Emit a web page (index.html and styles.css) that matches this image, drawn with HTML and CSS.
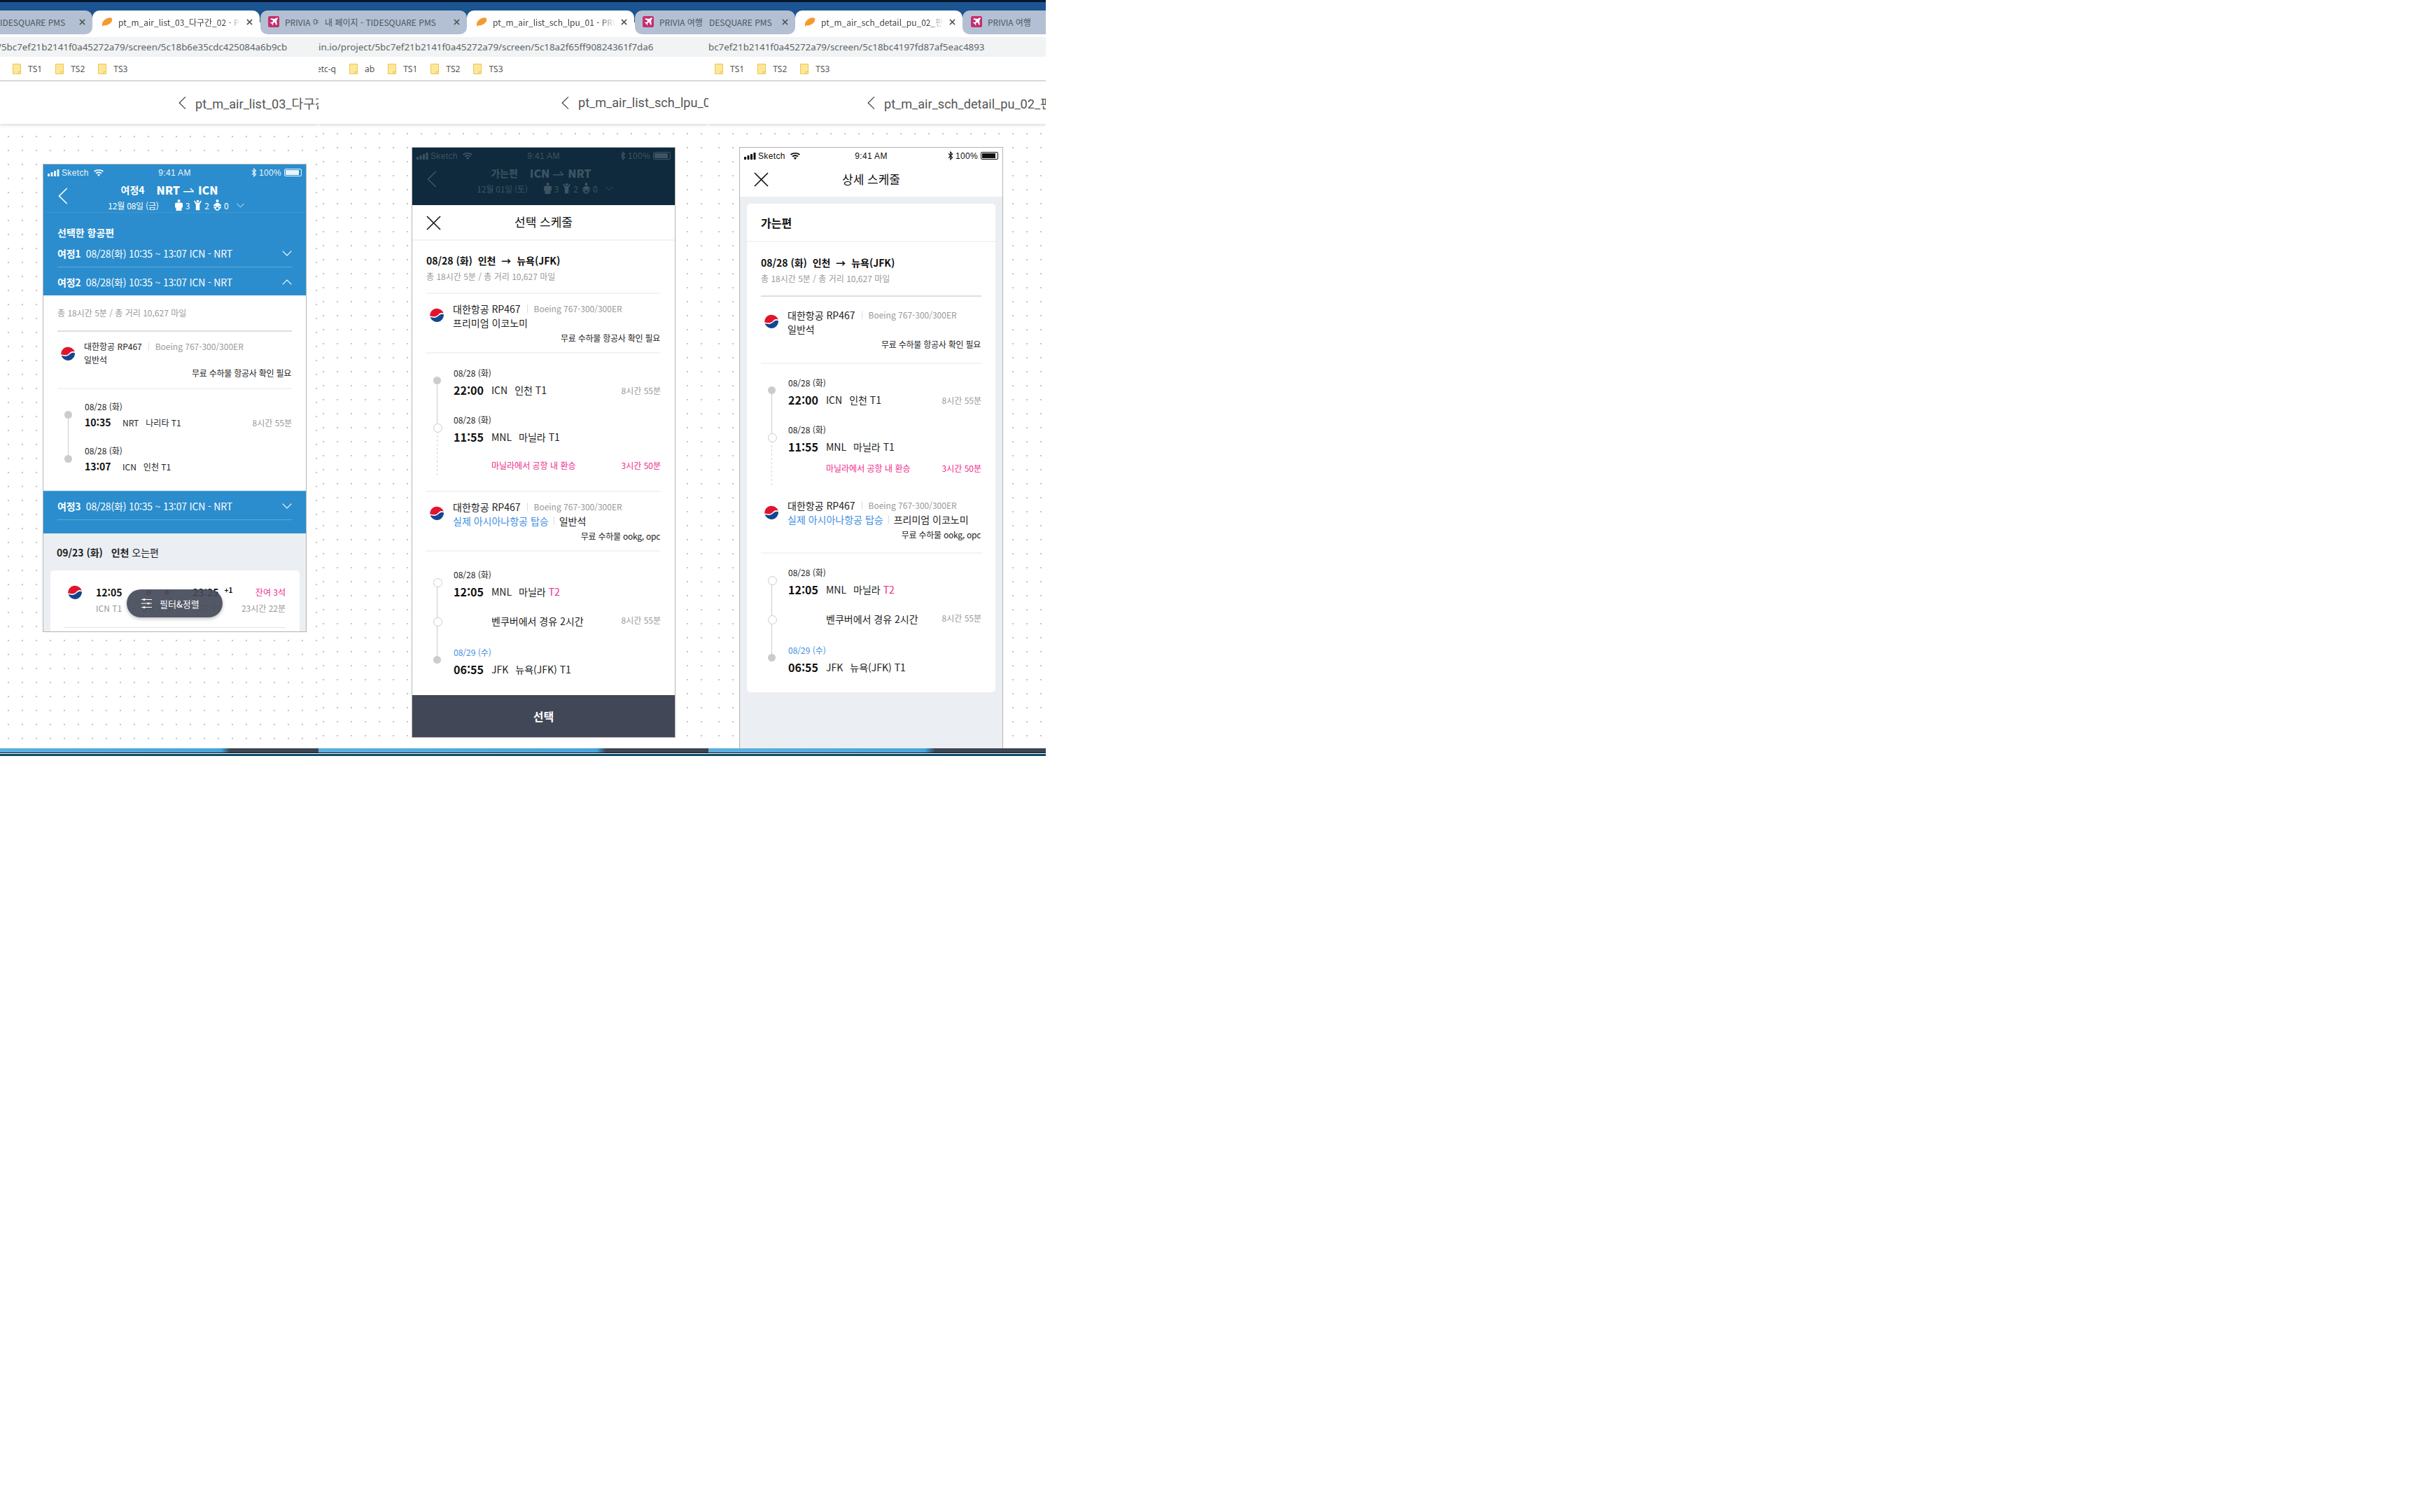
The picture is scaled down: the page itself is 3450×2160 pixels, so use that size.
FILE: index.html
```html
<!DOCTYPE html>
<html lang="ko">
<head>
<meta charset="utf-8">
<title>PRIVIA 여행 화면</title>
<link rel="stylesheet" href="styles.css">
</head>
<body>
<svg class="defs" width="0" height="0" aria-hidden="true">
  <symbol id="logo" viewBox="0 0 20 20">
    <circle cx="10" cy="10" r="10" fill="#fff"/>
    <path fill="#e2142d" d="M.2 11.500A10 10 0 0 1 19.800 8C18.500 6.500 15.500 6.500 13.500 8.300 11.500 10.200 9.500 12.500 6.500 12.300 4 12.200 1.800 11 .2 11.500Z"/>
    <path fill="#12468e" d="M20 9.600A10 10 0 0 1 .6 13.300C2.500 13.200 4 14 6.500 14 10 14 12 11.500 14 10 15.800 8.700 18.500 8.300 20 9.600Z"/>
  </symbol>
  <symbol id="signal" viewBox="0 0 17 10"><rect x="0" y="6" width="3" height="4" rx=".6"/><rect x="4.500" y="4" width="3" height="6" rx=".6"/><rect x="9" y="2" width="3" height="8" rx=".6"/><rect x="13.500" y="0" width="3" height="10" rx=".6"/></symbol>
  <symbol id="wifi" viewBox="0 0 14 10"><path d="M7 10 4.700 7.500c1.300-1.100 3.300-1.100 4.600 0L7 10ZM3.600 6.300 2.300 4.900c2.700-2.200 6.700-2.200 9.400 0l-1.300 1.400c-2-1.500-4.800-1.500-6.800 0ZM1.200 3.700 0 2.400c4-3.200 10-3.200 14 0l-1.200 1.300C9.400 1.100 4.600 1.100 1.200 3.700Z"/></symbol>
  <symbol id="bt" viewBox="0 0 8 13"><path d="M1 3.300 6.500 9 3.800 11.800V1.200L6.500 4 1 9.700" fill="none" stroke="currentColor" stroke-width="1.200"/></symbol>
  <symbol id="adult" viewBox="0 0 11 16"><circle cx="5.500" cy="2" r="2"/><path d="M2 4.600h7c1.100 0 2 .9 2 2v5H9.500V16h-8v-4.400H0v-5c0-1.100.9-2 2-2Z"/></symbol>
  <symbol id="child" viewBox="0 0 12 16"><circle cx="6" cy="2" r="2"/><path d="M0 1.500 1.300.8 4 4.500h4L10.700.8l1.300.7-3 5.700V16H3V7.200L0 1.500Z"/></symbol>
  <symbol id="baby" viewBox="0 0 11 16"><circle cx="5.500" cy="2" r="2"/><path d="M4 4.800h3L11 8v1.200H0V8L4 4.800Z"/><circle cx="5.500" cy="12.500" r="2.600" fill="none" stroke="currentColor" stroke-width="1.500"/><circle cx="1.500" cy="11.500" r="1.300"/><circle cx="9.500" cy="11.500" r="1.300"/></symbol>
  <symbol id="close" viewBox="0 0 21 21"><path d="M1 1 20 20M20 1 1 20" fill="none" stroke="currentColor" stroke-width="1.600"/></symbol>
  <symbol id="back" viewBox="0 0 14 24"><path d="M12.700 1 1.500 12l11.200 11" fill="none" stroke="currentColor" stroke-width="1.600"/></symbol>
  <symbol id="chev" viewBox="0 0 14 8"><path d="M.7.700 7 7 13.300.7" fill="none" stroke="currentColor" stroke-width="1.100"/></symbol>
  <symbol id="harrow" viewBox="0 0 15 7"><path d="M0 5.700h14.500L10 1" fill="none" stroke="currentColor" stroke-width="1.500"/></symbol>
  <symbol id="zep" viewBox="0 0 16 16"><path fill="#f59a2e" d="M1 11C2 6.500 6 3 11 2.300c2-.3 3.800.3 4.200 1.600.5 1.700-.6 4.600-3 6.600-2.500 2-6 3.200-8.500 2.800L1 14.700 1 11Z"/></symbol>
  <symbol id="privia" viewBox="0 0 16 16"><rect width="16" height="16" rx="2.500" fill="#c42f6e"/><path fill="#fff" d="M12.800 2.300c.7-.2 1.200.3 1 1L13 5 12 6.600l.8 5.200-1.100 1.100L9.300 8.500 7 10.500l.3 2-.8.800-1.300-2.500-2.500-1.300.8-.8 2 .3 2-2.300L3.100 4.300l1.100-1.100 5.200.8L11 3l1.800-.7Z"/></symbol>
  <symbol id="x" viewBox="0 0 10 10"><path d="M1 1 9 9M9 1 1 9" fill="none" stroke="currentColor" stroke-width="1.800"/></symbol>
  <symbol id="folder" viewBox="0 0 12 15"><path d="M.5.500h11v14H.5z" fill="#fde79a" stroke="#ecc650"/><path d="M8 14.500v-3h3.500" fill="none" stroke="#ecc650"/></symbol>
  <symbol id="filter" viewBox="0 0 15 14"><path d="M0 1.500h15M0 7h15M0 12.500h15" stroke="#fff" fill="none" stroke-width="1.200"/><circle cx="4" cy="1.500" r="1.600" fill="#fff"/><circle cx="10" cy="7" r="1.600" fill="#fff"/><circle cx="4" cy="12.500" r="1.600" fill="#fff"/></symbol>
</svg>

<main class="page">

<!-- ============ window 1 ============ -->
<section class="slice s1">
  <div class="topband"></div>
  <div class="tabs">
    <div class="tab off t-first"><span class="label lead">IDESQUARE PMS</span><svg class="tab-x"><use href="#x"/></svg></div>
    <div class="tab on"><svg class="fav"><use href="#zep"/></svg><span class="label fade">pt_m_air_list_03_다구간_02 - PRIVIA</span><svg class="tab-x"><use href="#x"/></svg></div>
    <div class="tab off t-open"><svg class="fav"><use href="#privia"/></svg><span class="label">PRIVIA 여행</span></div>
  </div>
  <div class="addr"><span class="addr-in">/5bc7ef21b2141f0a45272a79/screen/5c18b6e35cdc425084a6b9cb</span></div>
  <nav class="marks">
    <span class="mark"><svg class="folder"><use href="#folder"/></svg>TS1</span>
    <span class="mark"><svg class="folder"><use href="#folder"/></svg>TS2</span>
    <span class="mark"><svg class="folder"><use href="#folder"/></svg>TS3</span>
  </nav>
  <header class="scr-head"><svg class="scr-back"><use href="#back"/></svg><span class="scr-name">pt_m_air_list_03_다구간_02</span></header>
  <div class="canvas">
    <article class="phone p1">
      <div class="status">
        <div class="st-l"><svg class="i-signal"><use href="#signal"/></svg><span>Sketch</span><svg class="i-wifi"><use href="#wifi"/></svg></div>
        <div class="st-c">9:41 AM</div>
        <div class="st-r"><svg class="i-bt"><use href="#bt"/></svg><span>100%</span><span class="batt"><i></i></span></div>
      </div>
      <div class="appbar">
        <svg class="bar-back"><use href="#back"/></svg>
        <div class="bar-title"><span class="bt-ko">여정4</span><b>NRT</b><svg class="i-harrow"><use href="#harrow"/></svg><b>ICN</b></div>
        <div class="bar-sub"><span class="bs-date">12월 08일 (금)</span><svg class="i-pax"><use href="#adult"/></svg><span>3</span><svg class="i-pax"><use href="#child"/></svg><span>2</span><svg class="i-pax"><use href="#baby"/></svg><span>0</span><svg class="bs-chev"><use href="#chev"/></svg></div>
      </div>
      <div class="leg-panel">
        <h2 class="leg-head">선택한 항공편</h2>
        <div class="leg"><span><b>여정1</b>  08/28(화) 10:35 ~ 13:07 ICN - NRT</span><svg class="leg-chev"><use href="#chev"/></svg></div>
        <div class="leg leg-last"><span><b>여정2</b>  08/28(화) 10:35 ~ 13:07 ICN - NRT</span><svg class="leg-chev up"><use href="#chev"/></svg></div>
      </div>
      <div class="detail">
        <p class="sum">총 18시간 5분 / 총 거리 10,627 마일</p>
        <div class="rule strong"></div>
        <div class="carrier">
          <svg class="logo"><use href="#logo"/></svg>
          <div class="c-name">대한항공 RP467<i class="vbar"></i><span class="gray">Boeing 767-300/300ER</span></div>
          <div class="c-class">일반석</div>
          <div class="c-bag">무료 수하물 항공사 확인 필요</div>
        </div>
        <div class="rule"></div>
        <div class="stops">
          <div class="stop fill railed r63"><div class="date">08/28 (화)</div><div class="when"><b>10:35</b><span>NRT</span><span>나리타 T1</span><span class="dur">8시간 55분</span></div></div>
          <div class="stop fill"><div class="date">08/28 (화)</div><div class="when"><b>13:07</b><span>ICN</span><span>인천 T1</span></div></div>
        </div>
      </div>
      <div class="leg-panel tail">
        <div class="leg"><span><b>여정3</b>  08/28(화) 10:35 ~ 13:07 ICN - NRT</span><svg class="leg-chev"><use href="#chev"/></svg></div>
      </div>
      <div class="results">
        <h2 class="res-head"><b>09/23 (화)   인천</b> 오는편</h2>
        <div class="res-card">
          <svg class="logo"><use href="#logo"/></svg>
          <div class="rc-col rc-dep"><b>12:05</b><span class="gray">ICN T1</span></div>
          <div class="rc-mid"><span class="rc-dots"><i></i><i></i></span><span class="gray">2회 경유</span></div>
          <div class="rc-col rc-arr"><b>23:25 <sup>+1</sup></b><span class="gray">NRT T3</span></div>
          <div class="rc-end"><span class="pink">잔여 3석</span><span class="gray">23시간 22분</span></div>
          <div class="rc-rule"></div>
        </div>
      </div>
      <button class="pill" type="button"><svg class="i-filter"><use href="#filter"/></svg>필터&amp;정렬</button>
    </article>
  </div>
  <footer class="taskbar"><div class="tb-top"><i></i></div></footer>
</section>

<!-- ============ window 2 ============ -->
<section class="slice s2">
  <div class="topband"></div>
  <div class="tabs">
    <div class="tab off t-mid"><span class="label lead">내 페이지 - TIDESQUARE PMS</span><svg class="tab-x"><use href="#x"/></svg></div>
    <div class="tab on"><svg class="fav"><use href="#zep"/></svg><span class="label fade">pt_m_air_list_sch_lpu_01 - PRIVIA 여행</span><svg class="tab-x"><use href="#x"/></svg></div>
    <div class="tab off t-open"><svg class="fav"><use href="#privia"/></svg><span class="label">PRIVIA 여행</span></div>
  </div>
  <div class="addr"><span class="addr-in">in.io/project/5bc7ef21b2141f0a45272a79/screen/5c18a2f65ff90824361f7da6</span></div>
  <nav class="marks">
    <span class="mark etc">etc-q</span>
    <span class="mark"><svg class="folder"><use href="#folder"/></svg>ab</span>
    <span class="mark"><svg class="folder"><use href="#folder"/></svg>TS1</span>
    <span class="mark"><svg class="folder"><use href="#folder"/></svg>TS2</span>
    <span class="mark"><svg class="folder"><use href="#folder"/></svg>TS3</span>
  </nav>
  <header class="scr-head"><svg class="scr-back"><use href="#back"/></svg><span class="scr-name">pt_m_air_list_sch_lpu_01</span></header>
  <div class="canvas">
    <article class="phone p2">
      <div class="dim-top">
        <div class="status">
          <div class="st-l"><svg class="i-signal"><use href="#signal"/></svg><span>Sketch</span><svg class="i-wifi"><use href="#wifi"/></svg></div>
          <div class="st-c">9:41 AM</div>
          <div class="st-r"><svg class="i-bt"><use href="#bt"/></svg><span>100%</span><span class="batt"><i></i></span></div>
        </div>
        <div class="appbar">
          <svg class="bar-back"><use href="#back"/></svg>
          <div class="bar-title"><span class="bt-ko">가는편</span><b>ICN</b><svg class="i-harrow"><use href="#harrow"/></svg><b>NRT</b></div>
          <div class="bar-sub"><span class="bs-date">12월 01일 (토)</span><svg class="i-pax"><use href="#adult"/></svg><span>3</span><svg class="i-pax"><use href="#child"/></svg><span>2</span><svg class="i-pax"><use href="#baby"/></svg><span>0</span><svg class="bs-chev"><use href="#chev"/></svg></div>
        </div>
      </div>
      <div class="sheet-bar"><svg class="x-btn"><use href="#close"/></svg><h1>선택 스케줄</h1></div>
      <div class="sheet-body">
        <h2 class="route">08/28 (화)&nbsp; 인천 &nbsp;→&nbsp; 뉴욕(JFK)</h2>
        <p class="sum">총 18시간 5분 / 총 거리 10,627 마일</p>
        <div class="rule"></div>
        <div class="carrier">
          <svg class="logo"><use href="#logo"/></svg>
          <div class="c-name">대한항공 RP467<i class="vbar"></i><span class="gray">Boeing 767-300/300ER</span></div>
          <div class="c-class">프리미엄 이코노미</div>
          <div class="c-bag">무료 수하물 항공사 확인 필요</div>
        </div>
        <div class="rule"></div>
        <div class="stops">
          <div class="stop fill railed r67"><div class="date">08/28 (화)</div><div class="when"><b>22:00</b><span>ICN</span><span>인천 T1</span><span class="dur">8시간 55분</span></div></div>
          <div class="stop hollow railed dashed r71"><div class="date">08/28 (화)</div><div class="when"><b>11:55</b><span>MNL</span><span>마닐라 T1</span></div></div>
          <div class="transfer pink"><span>마닐라에서 공항 내 환승</span><span class="dur pink">3시간 50분</span></div>
        </div>
        <div class="rule after-transfer"></div>
        <div class="carrier">
          <svg class="logo"><use href="#logo"/></svg>
          <div class="c-name">대한항공 RP467<i class="vbar"></i><span class="gray">Boeing 767-300/300ER</span></div>
          <div class="c-class"><span class="blue">실제 아시아나항공 탑승</span><i class="vbar short"></i>일반석</div>
          <div class="c-bag">무료 수하물 ookg, opc</div>
        </div>
        <div class="rule"></div>
        <div class="stops second">
          <div class="stop hollow railed r57"><div class="date">08/28 (화)</div><div class="when"><b>12:05</b><span>MNL</span><span>마닐라 <em class="pink">T2</em></span></div></div>
          <div class="via hollow railed r54"><span>벤쿠버에서 경유 2시간</span><span class="dur">8시간 55분</span></div>
          <div class="stop fill"><div class="date blue">08/29 (수)</div><div class="when"><b>06:55</b><span>JFK</span><span>뉴욕(JFK) T1</span></div></div>
        </div>
      </div>
      <button class="cta" type="button">선택</button>
    </article>
  </div>
  <footer class="taskbar"><div class="tb-top"><i></i></div></footer>
</section>

<!-- ============ window 3 ============ -->
<section class="slice s3">
  <div class="topband"></div>
  <div class="tabs">
    <div class="tab off t-mid"><span class="label lead">DESQUARE PMS</span><svg class="tab-x"><use href="#x"/></svg></div>
    <div class="tab on"><svg class="fav"><use href="#zep"/></svg><span class="label fade">pt_m_air_sch_detail_pu_02_편도 - PRIVIA</span><svg class="tab-x"><use href="#x"/></svg></div>
    <div class="tab off t-open"><svg class="fav"><use href="#privia"/></svg><span class="label">PRIVIA 여행</span></div>
  </div>
  <div class="addr"><span class="addr-in">bc7ef21b2141f0a45272a79/screen/5c18bc4197fd87af5eac4893</span></div>
  <nav class="marks">
    <span class="mark"><svg class="folder"><use href="#folder"/></svg>TS1</span>
    <span class="mark"><svg class="folder"><use href="#folder"/></svg>TS2</span>
    <span class="mark"><svg class="folder"><use href="#folder"/></svg>TS3</span>
  </nav>
  <header class="scr-head"><svg class="scr-back"><use href="#back"/></svg><span class="scr-name">pt_m_air_sch_detail_pu_02_편도</span></header>
  <div class="canvas">
    <article class="phone p3">
      <div class="status">
        <div class="st-l"><svg class="i-signal"><use href="#signal"/></svg><span>Sketch</span><svg class="i-wifi"><use href="#wifi"/></svg></div>
        <div class="st-c">9:41 AM</div>
        <div class="st-r"><svg class="i-bt"><use href="#bt"/></svg><span>100%</span><span class="batt"><i></i></span></div>
      </div>
      <div class="sheet-bar"><svg class="x-btn"><use href="#close"/></svg><h1>상세 스케줄</h1></div>
      <div class="detail-wrap">
        <div class="detail-card">
          <h3 class="dir">가는편</h3>
          <div class="detail-in">
            <h2 class="route">08/28 (화)&nbsp; 인천 &nbsp;→&nbsp; 뉴욕(JFK)</h2>
            <p class="sum">총 18시간 5분 / 총 거리 10,627 마일</p>
            <div class="rule strong"></div>
            <div class="carrier">
              <svg class="logo"><use href="#logo"/></svg>
              <div class="c-name">대한항공 RP467<i class="vbar"></i><span class="gray">Boeing 767-300/300ER</span></div>
              <div class="c-class">일반석</div>
              <div class="c-bag">무료 수하물 항공사 확인 필요</div>
            </div>
            <div class="rule"></div>
            <div class="stops">
              <div class="stop fill railed r67"><div class="date">08/28 (화)</div><div class="when"><b>22:00</b><span>ICN</span><span>인천 T1</span><span class="dur">8시간 55분</span></div></div>
              <div class="stop hollow railed dashed r70"><div class="date">08/28 (화)</div><div class="when"><b>11:55</b><span>MNL</span><span>마닐라 T1</span></div></div>
              <div class="transfer pink"><span>마닐라에서 공항 내 환승</span><span class="dur pink">3시간 50분</span></div>
            </div>
            <div class="carrier plain">
              <svg class="logo"><use href="#logo"/></svg>
              <div class="c-name">대한항공 RP467<i class="vbar"></i><span class="gray">Boeing 767-300/300ER</span></div>
              <div class="c-class"><span class="blue">실제 아시아나항공 탑승</span><i class="vbar short"></i>프리미엄 이코노미</div>
              <div class="c-bag">무료 수하물 ookg, opc</div>
            </div>
            <div class="rule"></div>
            <div class="stops second">
              <div class="stop hollow railed r57"><div class="date">08/28 (화)</div><div class="when"><b>12:05</b><span>MNL</span><span>마닐라 <em class="pink">T2</em></span></div></div>
              <div class="via hollow railed r54"><span>벤쿠버에서 경유 2시간</span><span class="dur">8시간 55분</span></div>
              <div class="stop fill"><div class="date blue">08/29 (수)</div><div class="when"><b>06:55</b><span>JFK</span><span>뉴욕(JFK) T1</span></div></div>
            </div>
          </div>
        </div>
      </div>
    </article>
  </div>
  <footer class="taskbar"><div class="tb-top"><i></i></div></footer>
</section>

</main>
</body>
</html>
```

FILE: styles.css
```css
* { box-sizing: border-box; }
html, body { margin: 0; padding: 0; background: #fff; }
body { width: 3450px; height: 2160px; font-family: "Noto Sans CJK KR", "Noto Sans", sans-serif; color: #222; }
.defs { position: absolute; }
h1, h2, h3, p { margin: 0; font: inherit; }
svg { display: block; fill: currentColor; flex: none; }
em { font-style: normal; }
button { font-family: inherit; border: 0; margin: 0; }

.page { display: flex; width: 1494px; height: 1080px; overflow: hidden; }
.slice { display: flex; flex-direction: column; height: 1080px; overflow: hidden; background: #fff; }
.s1 { width: 455px; }
.s2 { width: 557px; }
.s3 { width: 482px; }

/* browser chrome */
.topband { height: 15px; flex: none; border-top: 3px solid #06162c; background: #1c5491; }
.tabs { display: flex; height: 34px; flex: none; background: linear-gradient(#1c5491 50%, #fff 50%); font-size: 12px; color: #4d5560; }
.tab { height: 34px; padding-bottom: 2px; display: flex; align-items: center; flex: none; white-space: nowrap; overflow: hidden; }
.tab.on { width: 239px; background: #fff; border-radius: 10px 10px 0 0; padding: 0 10px 2px 13px; color: #444; }
.tab.off { background: #b3c0d3; border-radius: 10px; }
.t-first { width: 132px; padding-right: 10px; }
.t-mid { padding-right: 10px; }
.s2 .t-mid { width: 212px; padding-left: 9px; border-top-left-radius: 0; border-bottom-left-radius: 0; }
.s3 .t-mid { width: 124px; padding-left: 1px; border-top-left-radius: 0; border-bottom-left-radius: 0; }
.t-first { border-top-left-radius: 0 !important; border-bottom-left-radius: 0 !important; }
.s1 .t-open { width: 84px; margin-left: 1px; padding-left: 11px; border-top-right-radius: 0; border-bottom-right-radius: 0; }
.s2 .t-open { width: 106px; margin-left: 1px; padding-left: 11px; border-top-right-radius: 0; border-bottom-right-radius: 0; }
.s3 .t-open { width: 119px; padding-left: 12px; border-top-right-radius: 0; border-bottom-right-radius: 0; }
.fav { width: 16px; height: 16px; margin-right: 8px; }
.label { flex: 1; overflow: hidden; }
.label.lead { display: block; }
.label.fade { -webkit-mask-image: linear-gradient(90deg, #000 88%, transparent); mask-image: linear-gradient(90deg, #000 88%, transparent); }
.tab-x { width: 9px; height: 9px; margin-left: 8px; color: #555; }

.addr { height: 28px; flex: none; margin-top: 4px; background: #f1f3f4; font-family: "Noto Sans", sans-serif; font-size: 13.35px; line-height: 28px; color: #5f6368; white-space: nowrap; overflow: hidden; }
.s1 .addr-in { margin-left: -3px; }
.marks { height: 35px; flex: none; display: flex; align-items: center; font-family: "Noto Sans", sans-serif; font-size: 12px; color: #555; border-bottom: 1px solid #bdbdbd; white-space: nowrap; }
.mark { display: flex; align-items: center; }
.mark + .mark { margin-left: 19px; }
.folder { width: 12px; height: 15px; margin-right: 10px; }
.s1 .marks { padding-left: 18px; }
.s2 .marks { padding-left: 0; }
.mark.etc { width: 25px; flex: none; overflow: hidden; justify-content: flex-end; }
.s3 .marks { padding-left: 9px; }

.scr-head { height: 61px; flex: none; display: flex; align-items: center; white-space: nowrap; overflow: hidden; background: #fff; box-shadow: 0 2px 4px rgba(0,0,0,.14); position: relative; z-index: 2; font-family: Roboto, "Noto Sans CJK KR", sans-serif; font-size: 18.1px; color: #555; }
.scr-back { width: 11px; height: 20px; margin-right: 13px; color: #444; }
.s1 .scr-head { padding-left: 255px; }
.s2 .scr-head { padding-left: 347px; }
.s3 .scr-head { padding-left: 227px; }

.canvas { flex: 1; min-height: 0; overflow: hidden; background-image: radial-gradient(circle at 1px 1px, #c4c4c4 1px, transparent 1.3px); background-size: 20px 20px; }
.s1 .canvas { padding: 57px 0 0 61px; background-position: 11px 17px; }
.s2 .canvas { padding: 33px 0 0 133px; background-position: 6px 13px; }
.s3 .canvas { padding: 33px 0 0 44px; background-position: 14px 13px; }

.taskbar { height: 11px; flex: none; position: relative; z-index: 3; background: linear-gradient(#071b2b 0 1px, #fff 1px 2px, #0d5474 2px, #0e3f58); background-size: 100% 5px; background-position: 0 6px; background-repeat: no-repeat; }
.tb-top { height: 6px; background: linear-gradient(90deg, #5cb0e0, #3f9fd7); position: relative; display: flex; justify-content: flex-end; }
.tb-top i { display: block; width: 138px; background: linear-gradient(90deg, #3f9fd7, #3d4754 8%, #3c4552); }
.s2 .tb-top i { width: 159px; }
.s3 .tb-top i { width: 172px; }

/* phone frames */
.phone { position: relative; width: 377px; border: 1px solid #b4b4b4; display: flex; flex-direction: column; background: #fff; overflow: hidden; }
.p1 { height: 669px; }
.p2 { height: 844px; }
.p3 { height: 900px; border-bottom: 0; }

.status { height: 20px; flex: none; display: grid; grid-template-columns: 1fr auto 1fr; align-items: center; padding: 3px 6px 0; font-family: "Liberation Sans", sans-serif; font-size: 12px; letter-spacing: .35px; }
.st-l, .st-r { display: flex; align-items: center; }
.st-r { justify-content: flex-end; }
.i-signal { width: 17px; height: 10px; margin-right: 3px; }
.i-wifi { width: 14px; height: 10px; margin-left: 7px; }
.i-bt { width: 8px; height: 13px; margin-right: 3px; }
.batt { width: 25px; height: 11px; margin-left: 4px; border: 1px solid currentColor; border-radius: 2px; padding: 1px; position: relative; }
.batt i { display: block; height: 100%; background: currentColor; margin-right: 2px; }

.appbar { position: relative; height: 49px; flex: none; display: flex; flex-direction: column; align-items: center; }
.bar-back { position: absolute; left: 21px; top: 13px; width: 14px; height: 24px; }
.bar-title { height: 22px; margin-top: 5px; margin-left: -15px; display: flex; align-items: center; font-size: 16px; font-weight: 700; }
.bt-ko { font-size: 14px; margin-right: 17px; }
.i-harrow { width: 15px; height: 7px; margin: 0 6px 0 5px; }
.bar-sub { height: 18px; margin-top: 2px; margin-left: 4px; display: flex; align-items: center; font-size: 12px; }
.bs-date { margin-right: 17px; letter-spacing: -.2px; }
.i-pax { width: 11px; height: 16px; margin: 0 4px 0 0; }
.bar-sub span + .i-pax { margin-left: 6px; }
.bs-chev { width: 11px; height: 7px; margin-left: 11px; }

/* phone 1 */
.p1 .status, .p1 .appbar, .leg-panel { background: #2b8dcd; color: #fff; }
.p1 .appbar { border-bottom: 1px solid #3b97d3; }
.p1 .status { color: #eaf5fb; }
.leg-panel { padding: 19px 20px 0; flex: none; }
.leg-head { font-size: 14px; font-weight: 700; line-height: 18px; height: 18px; }
.leg { height: 41px; padding-top: 1px; display: flex; align-items: center; justify-content: space-between; font-size: 14px; letter-spacing: -.2px; border-bottom: 1px solid #5fa9da; white-space: pre; }
.leg-last { border-bottom: 0; height: 40px; }
.leg-chev { width: 14px; height: 8px; }
.leg-chev.up { transform: scaleY(-1); }
.leg-panel.tail { padding: 0 20px; height: 61px; border-top: 1px solid #5fa9da; }
.detail { height: 279px; padding: 16px 20px 0; flex: none; }
.sum { height: 18px; line-height: 18px; font-size: 12px; color: #999; }
.p1 .sum { margin-bottom: 16px; }

.rule { height: 2px; background: #f2f3f4; }
.rule.strong { background: #dedede; }

.carrier { position: relative; padding-left: 38px; font-size: 14px; }
.p1 .carrier { padding-top: 11px; padding-bottom: 11px; font-size: 12px; }
.logo { position: absolute; left: 5px; width: 20px; height: 20px; }
.p1 .carrier .logo { top: 21px; }
.c-name { height: 20px; line-height: 20px; display: flex; align-items: center; }
.c-name .gray { font-size: 12px; }
.vbar { display: inline-block; width: 1px; height: 12px; background: #ddd; margin: 0 9px; }
.vbar.short { margin: 0 7px; }
.c-class { height: 20px; line-height: 20px; display: flex; align-items: center; }
.p1 .c-class { height: 18px; line-height: 18px; }
.c-bag { height: 20px; line-height: 20px; text-align: right; font-size: 12px; letter-spacing: -.25px; margin-top: 2px; margin-right: 1px; }
.p1 .c-bag { margin-top: 0; }
.gray { color: #999; }
.pink { color: #f02a8c; }
.blue { color: #3f8fe3; }

.stops { position: relative; }
.p1 .stops { padding-top: 15px; }
.stop, .via, .transfer { position: relative; padding-left: 39px; }
.date { height: 20px; line-height: 20px; font-size: 12px; }
.when { display: flex; align-items: center; font-size: 12px; height: 22px; margin-top: 1px; }
.when b { width: 54px; font-size: 14px; font-weight: 700; flex: none; color: #111; }
.when span + span { margin-left: 10px; }
.dur { margin-left: auto !important; color: #999; font-size: 12px; }
.dur.pink { color: #f02a8c; }
.p1 .stop + .stop { margin-top: 20px; }

.stop.fill::before, .stop.hollow::before, .via::before { content: ""; position: absolute; z-index: 1; left: 10px; top: 16px; width: 11px; height: 11px; border-radius: 50%; background: #ccc; }
.stop.hollow::before, .via::before { background: #fff; border: 1px solid #ccc; }
.railed::after { content: ""; position: absolute; left: 15px; top: 21px; width: 1px; background: #ccc; }
.railed.dashed::after { background: repeating-linear-gradient(#d4d4d4 0 3px, transparent 3px 6px); }
.r63::after { height: 63px; }
.r67::after { height: 67px; }
.r70::after { height: 70px; }
.r71::after { height: 71px; }
.r57::after { height: 57px; }
.r54::after { height: 54px; }

.results { flex: 1; min-height: 0; background: #ebeef2; overflow: hidden; }
.res-head { height: 20px; line-height: 20px; margin: 17px 0 16px 19px; font-size: 14px; white-space: pre; }
.res-card { margin: 0 9px 0 10px; height: 100px; background: #fff; border-radius: 5px 5px 0 0; position: relative; display: grid; grid-template-columns: 65px 50px 76px 72px 1fr; padding-top: 21px; font-size: 12px; align-content: start; }
.res-card .logo { position: absolute; left: 25px; top: 21px; }
.rc-col { display: flex; flex-direction: column; }
.rc-dep { grid-column: 2; }
.rc-arr { padding-left: 12px; }
.rc-col b { font-size: 14px; line-height: 20px; color: #111; white-space: nowrap; }
.rc-col sup { font-size: 10px; line-height: 0; vertical-align: 5px; margin-left: 4px; }
.rc-col .gray { margin-top: 2px; line-height: 22px; white-space: nowrap; }
.rc-mid { display: flex; flex-direction: column; align-items: center; }
.rc-dots { height: 20px; display: flex; align-items: center; gap: 19px; }
.rc-dots i { width: 7px; height: 7px; border-radius: 50%; background: #f02a8c; }
.rc-mid .gray { margin-top: 2px; line-height: 22px; }
.rc-end { display: flex; flex-direction: column; align-items: flex-end; margin-right: 20px; white-space: nowrap; }
.rc-end span:first-child { line-height: 20px; }
.rc-end span:last-child { margin-top: 2px; line-height: 22px; }
.rc-rule { position: absolute; left: 20px; right: 20px; top: 81px; height: 1px; background: #e4e4e4; }
.pill { position: absolute; left: 119px; top: 607px; width: 137px; height: 40px; border-radius: 20px; background: rgba(70,75,90,.93); box-shadow: 0 2px 5px rgba(0,0,0,.25); color: #fff; font-size: 13px; display: flex; align-items: center; padding: 0 0 0 21px; }
.i-filter { width: 15px; height: 14px; margin-right: 11px; }

/* phone 2 */
.dim-top { background: #0e2a3c; color: #3f5463; height: 82px; flex: none; }
.p2 .bar-title { margin-left: -7px; margin-top: 5px; }
.p2 .bar-title .bt-ko { margin-right: 17px; }
.sheet-bar { height: 49px; flex: none; position: relative; display: flex; align-items: center; justify-content: center; color: #111; }
.sheet-bar h1 { font-size: 17px; line-height: 22px; margin-top: -1px; }
.x-btn { position: absolute; left: 20px; top: 15px; width: 21px; height: 21px; }
.sheet-body { flex: 1; border-top: 2px solid #f2f3f4; padding: 17px 20px 0; min-height: 0; overflow: hidden; }
.route { height: 22px; line-height: 22px; font-size: 14px; font-weight: 700; color: #111; white-space: nowrap; }
.p2 .sum, .p3 .sum { margin: 3px 0 14px; }
.p2 .carrier { padding-top: 11px; padding-bottom: 10px; }
.p2 .logo { top: 20px; }
.p2 .when, .p3 .when { height: 24px; margin-top: 2px; font-size: 14px; }
.p2 .when b, .p3 .when b { font-size: 16px; }
.p2 .stops { padding-top: 18px; }
.p3 .stops { padding-top: 17px; }
.p2 .stop + .stop, .p3 .stop + .stop { margin-top: 21px; }
.p2 .railed::after, .p3 .railed::after { top: 20px; }
.p2 .stop::before, .p3 .stop::before { top: 15px; }
.transfer { height: 20px; line-height: 20px; margin-top: 19px; font-size: 12px; padding-left: 93px; display: flex; }
.p2 .rule.after-transfer { margin-top: 26px; }
.via { height: 20px; margin-top: 20px; padding-left: 93px; font-size: 14px; line-height: 20px; display: flex; }
.via .dur { line-height: 18px; }
.via::before { top: 5px; }
.via.railed::after { top: 10px !important; }
.p2 .stops.second { padding-top: 23px; }
.via + .stop { margin-top: 25px !important; }
.cta { height: 60px; flex: none; background: #414756; color: #fff; font-size: 16px; font-weight: 700; display: block; width: 100%; }

/* phone 3 */
.p3 .status { color: #111; }
.p3 .sheet-bar { height: 50px; }
.detail-wrap { flex: 1; min-height: 0; background: #ebeef2; padding: 10px 10px 0; }
.detail-card { width: 355px; background: #fff; border-radius: 5px; height: 698px; }
.dir { height: 53px; line-height: 54px; padding-left: 20px; font-size: 16px; font-weight: 700; color: #111; }
.detail-in { border-top: 2px solid #f2f3f4; padding: 18px 20px 0; }
.p3 .sum { margin: 3px 0 15px; }
.p3 .carrier { padding-top: 16px; padding-bottom: 16px; }
.p3 .logo { top: 25px; }
.p3 .transfer { margin-top: 9px; }
.p3 .carrier.plain { padding-top: 33px; padding-bottom: 15px; }
.p3 .carrier.plain .logo { top: 43px; }
.p3 .stops.second { padding-top: 17px; }
```
